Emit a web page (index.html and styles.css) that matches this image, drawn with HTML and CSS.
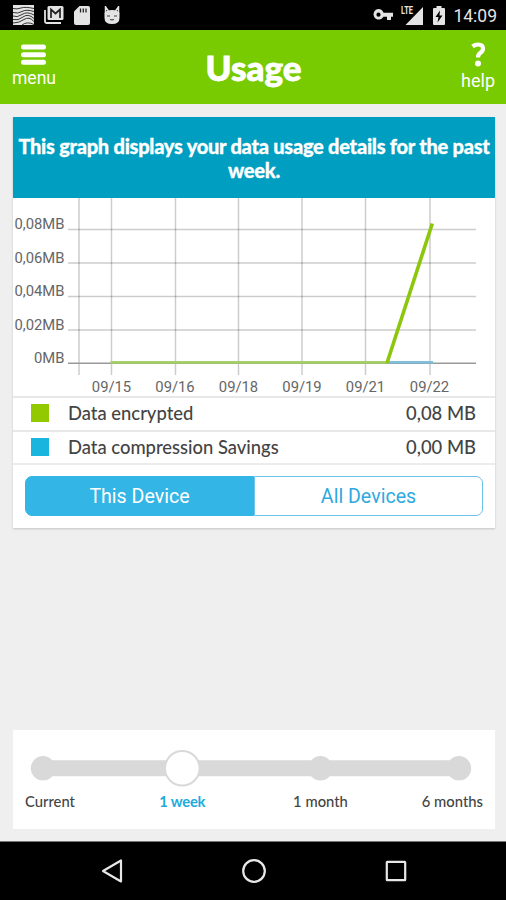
FILE: index.html
```html
<!DOCTYPE html>
<html lang="en">
<head>
  <meta charset="UTF-8" />
  <meta name="viewport" content="width=device-width, initial-scale=1.0"/>
  <title>Usage</title>
  <link rel="stylesheet" href="styles.css">
</head>
<body>

  <div class="status-bar">
    <div class="status-left">
      <svg width="21" height="20" viewBox="0 0 21 20">
        <rect width="21" height="20" fill="#e4e4e4"/>
        <g fill="none" stroke="#333" stroke-width="1">
          <path d="M0 3.5q4 1 8-.5t13 .5"/>
          <path d="M0 7.5q5 1.500 9-1t12 0"/>
          <path d="M0 11q4 2 9-1.500t12 .5"/>
          <path d="M0 14.500q5 1.500 10-2.500t11 1.500"/>
          <path d="M0 18q6 0 11-3.500t10 2"/>
          <path d="M9 20q5-4 12-.5"/>
        </g>
      </svg>
      <svg width="20" height="18" viewBox="0 0 20 18">
        <path d="M1 4v11.500q0 1.500 1.500 1.500H17" fill="none" stroke="#e4e4e4" stroke-width="1.800"/>
        <rect x="3.500" y="0" width="16" height="14" rx="1.500" fill="#e4e4e4"/>
        <path d="M7 12V3.500l4.500 4 4.500-4V12" fill="none" stroke="#222" stroke-width="1.700"/>
      </svg>
      <svg width="16" height="19" viewBox="0 0 16 19">
        <path d="M5.500 0H14q2 0 2 2v15q0 2-2 2H2q-2 0-2-2V5.500z" fill="#e4e4e4"/>
        <path d="M6.500 2.500v4M9.300 2.500v4M12 2.500v4" stroke="#222" stroke-width="1.300"/>
      </svg>
      <svg width="16" height="19" viewBox="0 0 16 19">
        <path d="M1.500 0v8M14.500 0v8M1.500 1l3 4M14.500 1l-3 4" stroke="#e4e4e4" stroke-width="1.500"/>
        <path d="M.5 7Q2 4 8 4t7.500 3V12q0 6-7.500 6T.5 12z" fill="#e4e4e4"/>
        <path d="M3 10h3M10 10h3M6 13.500q2 .8 4 0" fill="none" stroke="#444" stroke-width="1.200"/>
      </svg>
    </div>
    <div class="status-right">
      <svg width="20" height="12" viewBox="0 0 20 12">
        <path fill="#e4e4e4" fill-rule="evenodd" d="M5.500 0a5.300 5.300 0 0 1 5 3.800H20v4h-2V11h-4V7.800h-3.500A5.300 5.300 0 1 1 5.500 0zm0 3.600a2.100 2.100 0 1 0 0 4.200 2.100 2.100 0 0 0 0-4.200z"/>
      </svg>
      <svg class="signal" width="22" height="19" viewBox="0 0 22 19">
        <path d="M22 1v18H4.500z" fill="#e4e4e4"/>
        <path d="M0 0h13v9H0z"/>
        <text x="0" y="8" class="lte" textLength="12" lengthAdjust="spacingAndGlyphs">LTE</text>
      </svg>
      <svg class="battery" width="12" height="19" viewBox="0 0 12 19">
        <path d="M3.500 0h5v2H11q1 0 1 1v15q0 1-1 1H1q-1 0-1-1V3q0-1 1-1h2.500z" fill="#e4e4e4"/>
        <path d="M7 4.500L2.500 11h3L4.500 16.500 9.500 9.500h-3z"/>
      </svg>
      <span class="clock">14:09</span>
    </div>
  </div>

  <header class="header">
    <button class="header-button menu">
      <svg width="25" height="22" viewBox="0 0 25 22">
        <path d="M2.500 3h20M2.500 10.700h20M2.500 18.300h20" stroke="#fff" stroke-width="5" stroke-linecap="round"/>
      </svg>
      <span>menu</span>
    </button>
    <h1>Usage</h1>
    <button class="header-button help">
      <svg width="15" height="26" viewBox="0 0 15 26">
        <path d="M1.500 4.500Q4 2.500 7 2.500q5 0 5 4 0 2.500-2.500 4.300-2.500 1.700-2.500 4.700" fill="none" stroke="#fff" stroke-width="4.200"/>
        <circle cx="7" cy="21.500" r="3" fill="#fff"/>
      </svg>
      <span>help</span>
    </button>
  </header>

  <main class="content">
    <section class="card">
      <div class="banner">This graph displays your data usage details for the past week.</div>

      <svg class="chart" width="482" height="198" viewBox="0 0 482 198">
        <g class="grid">
          <path d="M55 31.500h408M55 65h408M55 98.500h408M55 132h408"/>
          <path d="M66 0v177M98.500 0v177M162.500 0v177M225.500 0v177M289 0v177M352.500 0v177M417 0v177"/>
        </g>
        <path class="axis" d="M55 165.300h408"/>
        <path class="line-savings" d="M374 164.300h46"/>
        <path class="line-flat" d="M97.500 164.300h277"/>
        <path class="line-encrypted" d="M374 165L419.300 25.500"/>
        <g class="label" text-anchor="end">
          <text x="51.500" y="31">0,08MB</text>
          <text x="51.500" y="64.500">0,06MB</text>
          <text x="51.500" y="98">0,04MB</text>
          <text x="51.500" y="131.500">0,02MB</text>
          <text x="51.500" y="165">0MB</text>
        </g>
        <g class="label" text-anchor="middle">
          <text x="98.500" y="194">09/15</text>
          <text x="162" y="194">09/16</text>
          <text x="225.500" y="194">09/18</text>
          <text x="289" y="194">09/19</text>
          <text x="352.500" y="194">09/21</text>
          <text x="416.500" y="194">09/22</text>
        </g>
      </svg>

      <div class="row">
        <span class="swatch green"></span>
        <span class="row-name">Data encrypted</span>
        <span class="row-value">0,08 MB</span>
      </div>
      <div class="row">
        <span class="swatch blue"></span>
        <span class="row-name">Data compression Savings</span>
        <span class="row-value">0,00 MB</span>
      </div>

      <div class="tabs">
        <button class="tab active">This Device</button>
        <button class="tab">All Devices</button>
      </div>
    </section>

    <section class="period">
      <svg class="slider" width="482" height="44" viewBox="0 0 482 44">
        <path d="M30 22.300h416" stroke="#d9d9d9" stroke-width="16"/>
        <g fill="#d9d9d9">
          <circle cx="30" cy="22.300" r="12.200"/>
          <circle cx="307.500" cy="22.300" r="12.200"/>
          <circle cx="446" cy="22.300" r="12.200"/>
        </g>
        <circle cx="169.300" cy="22.300" r="17.300" fill="#fff" stroke="#d9d9d9" stroke-width="2"/>
      </svg>
      <div class="period-labels">
        <span>Current</span>
        <span class="selected">1 week</span>
        <span>1 month</span>
        <span>6 months</span>
      </div>
    </section>
  </main>

  <nav class="nav-bar">
    <svg width="22" height="26" viewBox="0 0 22 26">
      <path d="M20 2.500v21L2 13z"/>
    </svg>
    <svg width="26" height="26" viewBox="0 0 26 26">
      <circle cx="13" cy="13" r="10.800"/>
    </svg>
    <svg width="22" height="26" viewBox="0 0 22 26">
      <rect x="1.800" y="3.800" width="18.400" height="18.400" rx=".5"/>
    </svg>
  </nav>

</body>
</html>
```
FILE: styles.css
```css
* {
  box-sizing: border-box;
}

body {
  margin: 0;
  height: 900px;
  display: flex;
  flex-direction: column;
  overflow: hidden;
  font-family: Lato, sans-serif;
  background: #efefef;
  color: #444;
}

button {
  margin: 0;
  padding: 0;
  border: none;
  background: none;
  color: inherit;
  cursor: pointer;
}

svg {
  display: block;
  flex: none;
}

/* status bar */
.status-bar {
  height: 30px;
  flex: none;
  display: flex;
  justify-content: space-between;
  padding: 0 9px 0 13px;
  background: #000;
}

.status-left,
.status-right {
  display: flex;
  align-items: center;
}

.status-left {
  gap: 10px;
}

.status-left svg:nth-child(4) {
  margin-left: 4px;
}

.signal {
  margin-left: 8px;
}

.battery {
  margin-left: 10px;
}

.lte {
  font: bold 10px Roboto, sans-serif;
  fill: #e4e4e4;
}

.clock {
  margin: 2px 0 0 8px;
  font: 17.5px/20px Roboto, sans-serif;
  color: #e4e4e4;
}

/* header */
.header {
  height: 74px;
  flex: none;
  display: grid;
  grid-template-columns: 1fr auto 1fr;
  padding: 0 11px 0 12px;
  background: #78cb00;
  color: #fff;
}

.header h1 {
  margin: 0;
  font-size: 35px;
  font-weight: 900;
  line-height: 75px;
  -webkit-text-stroke: 0.8px #fff;
}

.header-button {
  display: flex;
  flex-direction: column;
  align-items: center;
  font: 18px/22px Roboto, sans-serif;
}

.menu {
  justify-self: start;
  padding-top: 14px;
  font-size: 17.5px;
}

.help {
  justify-self: end;
  padding-top: 12px;
}

.menu span {
  margin-top: 1px;
}

.help span {
  margin-top: 2px;
}

/* usage card */
.content {
  flex: 1;
  display: flex;
  flex-direction: column;
  justify-content: space-between;
  padding: 13px 11px 12px 13px;
}

.card {
  background: #fff;
  box-shadow: 0 1px 2px rgba(0, 0, 0, 0.18);
}

.banner {
  height: 81px;
  padding: 17px 2px 0;
  background: #009ec1;
  color: #fff;
  font-size: 20px;
  font-weight: 900;
  line-height: 24px;
  letter-spacing: -0.25px;
  text-align: center;
  -webkit-text-stroke: 0.3px #fff;
}

.grid {
  fill: none;
  stroke: #000;
  stroke-opacity: 0.2;
  stroke-width: 1.5;
}

.axis {
  stroke: #999;
  stroke-width: 1.5;
}

.line-savings {
  stroke: #7fbfe0;
  stroke-width: 2.5;
}

.line-flat {
  stroke: #a5cf68;
  stroke-width: 2.8;
}

.line-encrypted {
  stroke: #8cc60d;
  stroke-width: 3.6;
}

.label {
  font: 14.8px Roboto, sans-serif;
  fill: #666;
}

.row {
  height: 33.5px;
  display: flex;
  align-items: center;
  padding: 0 19px 1px 18px;
  border-top: 2px solid #e8e8e8;
  font-size: 18.4px;
  font-weight: 500;
}

.swatch {
  width: 18px;
  height: 18px;
  margin-right: 19px;
}

.green {
  background: #93c901;
}

.blue {
  background: #19b5df;
}

.row-value {
  margin-left: auto;
}

.tabs {
  height: 65px;
  display: flex;
  padding: 11px 12px 12px;
  border-top: 2px solid #ececec;
}

.tab {
  flex: 1;
  border: 1px solid #6cc3ec;
  border-radius: 0 7px 7px 0;
  font: 19.6px Roboto, sans-serif;
  color: #2fa9e0;
}

.tab.active {
  border-color: #33b5e5;
  border-radius: 7px 0 0 7px;
  background: #33b5e5;
  color: #fff;
}

/* period slider */
.period {
  height: 99px;
  padding-top: 16px;
  background: #fff;
}

/* middle columns are centred under their slider stops */
.period-labels {
  display: grid;
  grid-template-columns: 88px 138.5px 138px 1fr;
  padding: 2px 12px 0;
  font-size: 14.8px;
  font-weight: 500;
  line-height: 18px;
  text-align: center;
}

.period-labels span:first-child {
  text-align: left;
}

.period-labels span:last-child {
  text-align: right;
}

.period-labels .selected {
  color: #1eabdc;
  font-weight: bold;
  letter-spacing: -0.2px;
}

/* navigation buttons */
.nav-bar {
  height: 59px;
  flex: none;
  display: flex;
  justify-content: space-between;
  align-items: center;
  padding: 0 99px 0 101px;
  background: #000;
  border-top: 1px solid #777;
}

.nav-bar svg {
  fill: none;
  stroke: #e8e8e8;
  stroke-width: 2.2;
  stroke-linejoin: round;
}
```
